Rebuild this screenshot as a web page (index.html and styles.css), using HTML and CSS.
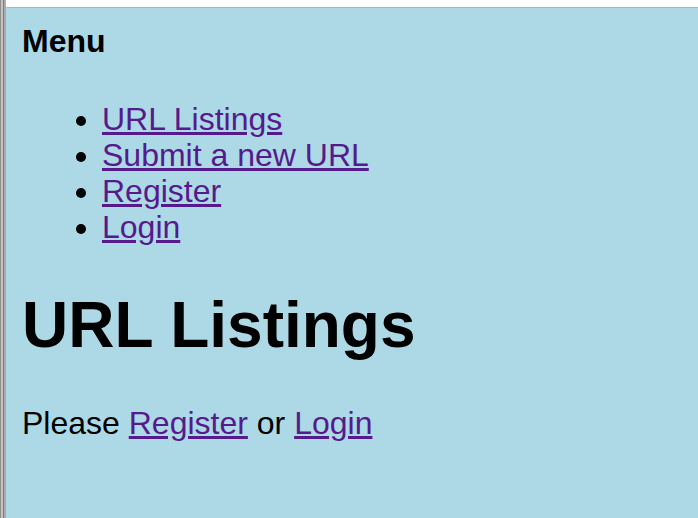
FILE: index.html
```html
<!DOCTYPE html>
<html>
<head>
<meta charset="utf-8">
<link rel="stylesheet" href="styles.css">
</head>
<body>
<div class="frame">
  <div class="edge"></div>
  <div class="main">
    <div class="topbar"></div>
    <div class="page">
      <h4 class="menu-title">Menu</h4>
      <ul class="menu">
        <li><a href="#">URL Listings</a></li>
        <li><a href="#">Submit a new URL</a></li>
        <li><a href="#">Register</a></li>
        <li><a href="#">Login</a></li>
      </ul>
      <h1 class="title">URL Listings</h1>
      <p class="note">Please <a href="#">Register</a> or <a href="#">Login</a></p>
    </div>
  </div>
</div>
</body>
</html>
```

FILE: styles.css
```css
html, body {
  margin: 0;
  height: 100%;
}
body {
  font-family: "Liberation Sans", Arial, sans-serif;
  font-size: 32px;
  line-height: 36px;
  color: #000;
  background: #fff;
  overflow: hidden;
}
.frame {
  display: flex;
  height: 100%;
}
.edge {
  width: 6px;
  flex: none;
  background: linear-gradient(to right, #8f8f8f 0, #8f8f8f 1px, #c4c4c4 1px, #c4c4c4 3px, #7d7d7d 3px, #7d7d7d 4px, #ababab 4px, #ababab 6px);
}
.main {
  flex: 1;
  display: flex;
  flex-direction: column;
}
.topbar {
  height: 7px;
  background: #fff;
  border-bottom: 1px solid #b3b3b3;
  flex: none;
}
.page {
  flex: 1;
  background: #add8e6;
  padding: 15px 16px 0;
}
.menu-title {
  font-size: 32px;
  font-weight: bold;
  margin: 0 0 42px;
}
.menu {
  margin: 0;
  padding-left: 80px;
}
.title {
  font-size: 64px;
  line-height: normal;
  font-weight: bold;
  margin: 43px 0 43px;
}
.note {
  margin: 0;
}
a {
  color: #551a8b;
  text-decoration: underline;
}
```
